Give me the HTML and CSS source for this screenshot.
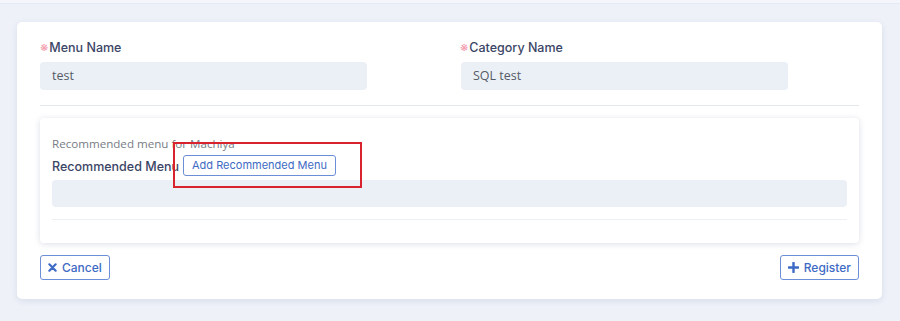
FILE: index.html
```html
<!doctype html>
<html lang="en">
<head>
    <meta charset="UTF-8">
    <title>Menu Edit</title>
    <link rel="stylesheet" href="styles.css">
</head>
<body>
<div class="topline"></div>
<div class="page">
    <div class="card">
        <div class="formRow">
            <div class="field">
                <label class="label"><span class="req">※</span>Menu Name</label>
                <div class="input">test</div>
            </div>
            <div class="field">
                <label class="label"><span class="req">※</span>Category Name</label>
                <div class="input">SQL test</div>
            </div>
        </div>
        <div class="divider"></div>
        <div class="subCard">
            <p class="hint">Recommended menu for Machiya</p>
            <div class="recHead">
                <span class="label">Recommended Menu</span>
                <button class="btn small">Add Recommended Menu</button>
                <div class="highlight"></div>
            </div>
            <div class="recList"></div>
            <div class="subLine"></div>
        </div>
        <div class="actions">
            <button class="btn">
                <svg width="9" height="9" viewBox="0 0 10 10"><path d="M1.5 1.5 L8.5 8.5 M8.5 1.5 L1.5 8.5" stroke="#3d6ac4" stroke-width="2.4" stroke-linecap="round"/></svg>
                Cancel
            </button>
            <button class="btn">
                <svg width="11" height="11" viewBox="0 0 10 10"><path d="M5 0.8 V9.2 M0.8 5 H9.2" stroke="#3d6ac4" stroke-width="2.2" stroke-linecap="round"/></svg>
                Register
            </button>
        </div>
    </div>
</div>
</body>
</html>
```

FILE: styles.css
```css
* {
    margin: 0;
    padding: 0;
    box-sizing: border-box;
}

html, body {
    height: 100%;
}

body {
    background: #eef1f8;
    font-family: "Inter", "Noto Sans", sans-serif;
    color: #3a4666;
}

.topline {
    height: 4px;
    background: #f4f6fb;
    border-bottom: 1px solid #e6eaf2;
}

.page {
    padding: 18px 18px 0 17px;
}

.card {
    background: #fff;
    border-radius: 5px;
    box-shadow: 0 2px 6px rgba(60, 80, 120, 0.12);
    padding: 13px 23px 20px 23px;
    height: 277px;
}

.formRow {
    display: grid;
    grid-template-columns: 420px 1fr;
}

.label {
    display: inline-block;
    font-size: 12.5px;
    font-weight: 500;
    color: #3b4566;
    line-height: 24px;
}

.req {
    color: #f29aac;
    font-weight: 400;
    font-size: 13px;
    margin-right: 1px;
}

.input {
    margin-top: 2px;
    width: 327px;
    height: 28px;
    background: #ebf0f7;
    border-radius: 4px;
    padding: 0 12px;
    font-family: "Open Sans", sans-serif;
    font-size: 12.5px;
    line-height: 28px;
    color: #555b66;
}

.field:nth-child(2) .input {
    margin-left: 1px;
}

.divider {
    height: 1px;
    background: #e3e7ee;
    margin: 15px 0 12px;
}

.subCard {
    background: #fff;
    border-radius: 4px;
    box-shadow: 0 1px 6px rgba(60, 80, 120, 0.18);
    padding: 17px 12px 0;
    height: 125px;
}

.hint {
    font-family: "Open Sans", sans-serif;
    font-size: 11.6px;
    color: #777c85;
    line-height: 17px;
}

.recHead {
    position: relative;
    display: flex;
    align-items: center;
    gap: 4px;
    height: 24px;
    margin-top: 1px;
}

.recHead .label {
    margin-top: 3px;
}

.recList {
    margin-top: 3px;
    height: 27px;
    background: #ebf0f7;
    border-radius: 4px;
}

.subLine {
    margin-top: 12px;
    height: 1px;
    background: #eceff4;
}

.highlight {
    position: absolute;
    left: 121px;
    top: -11px;
    width: 189px;
    height: 46px;
    border: 2px solid #d8232e;
}

.btn {
    display: inline-flex;
    align-items: center;
    gap: 5px;
    height: 25px;
    padding: 0 7px;
    background: #fff;
    border: 1px solid #6b8fd6;
    border-radius: 3px;
    color: #3d6ac4;
    font-family: "Inter", sans-serif;
    font-size: 12px;
    font-weight: 500;
}

.btn.small {
    height: 21px;
    padding: 0 8px;
    font-size: 11px;
    font-weight: 400;
}

.actions {
    display: flex;
    justify-content: space-between;
    margin-top: 12px;
}
```
